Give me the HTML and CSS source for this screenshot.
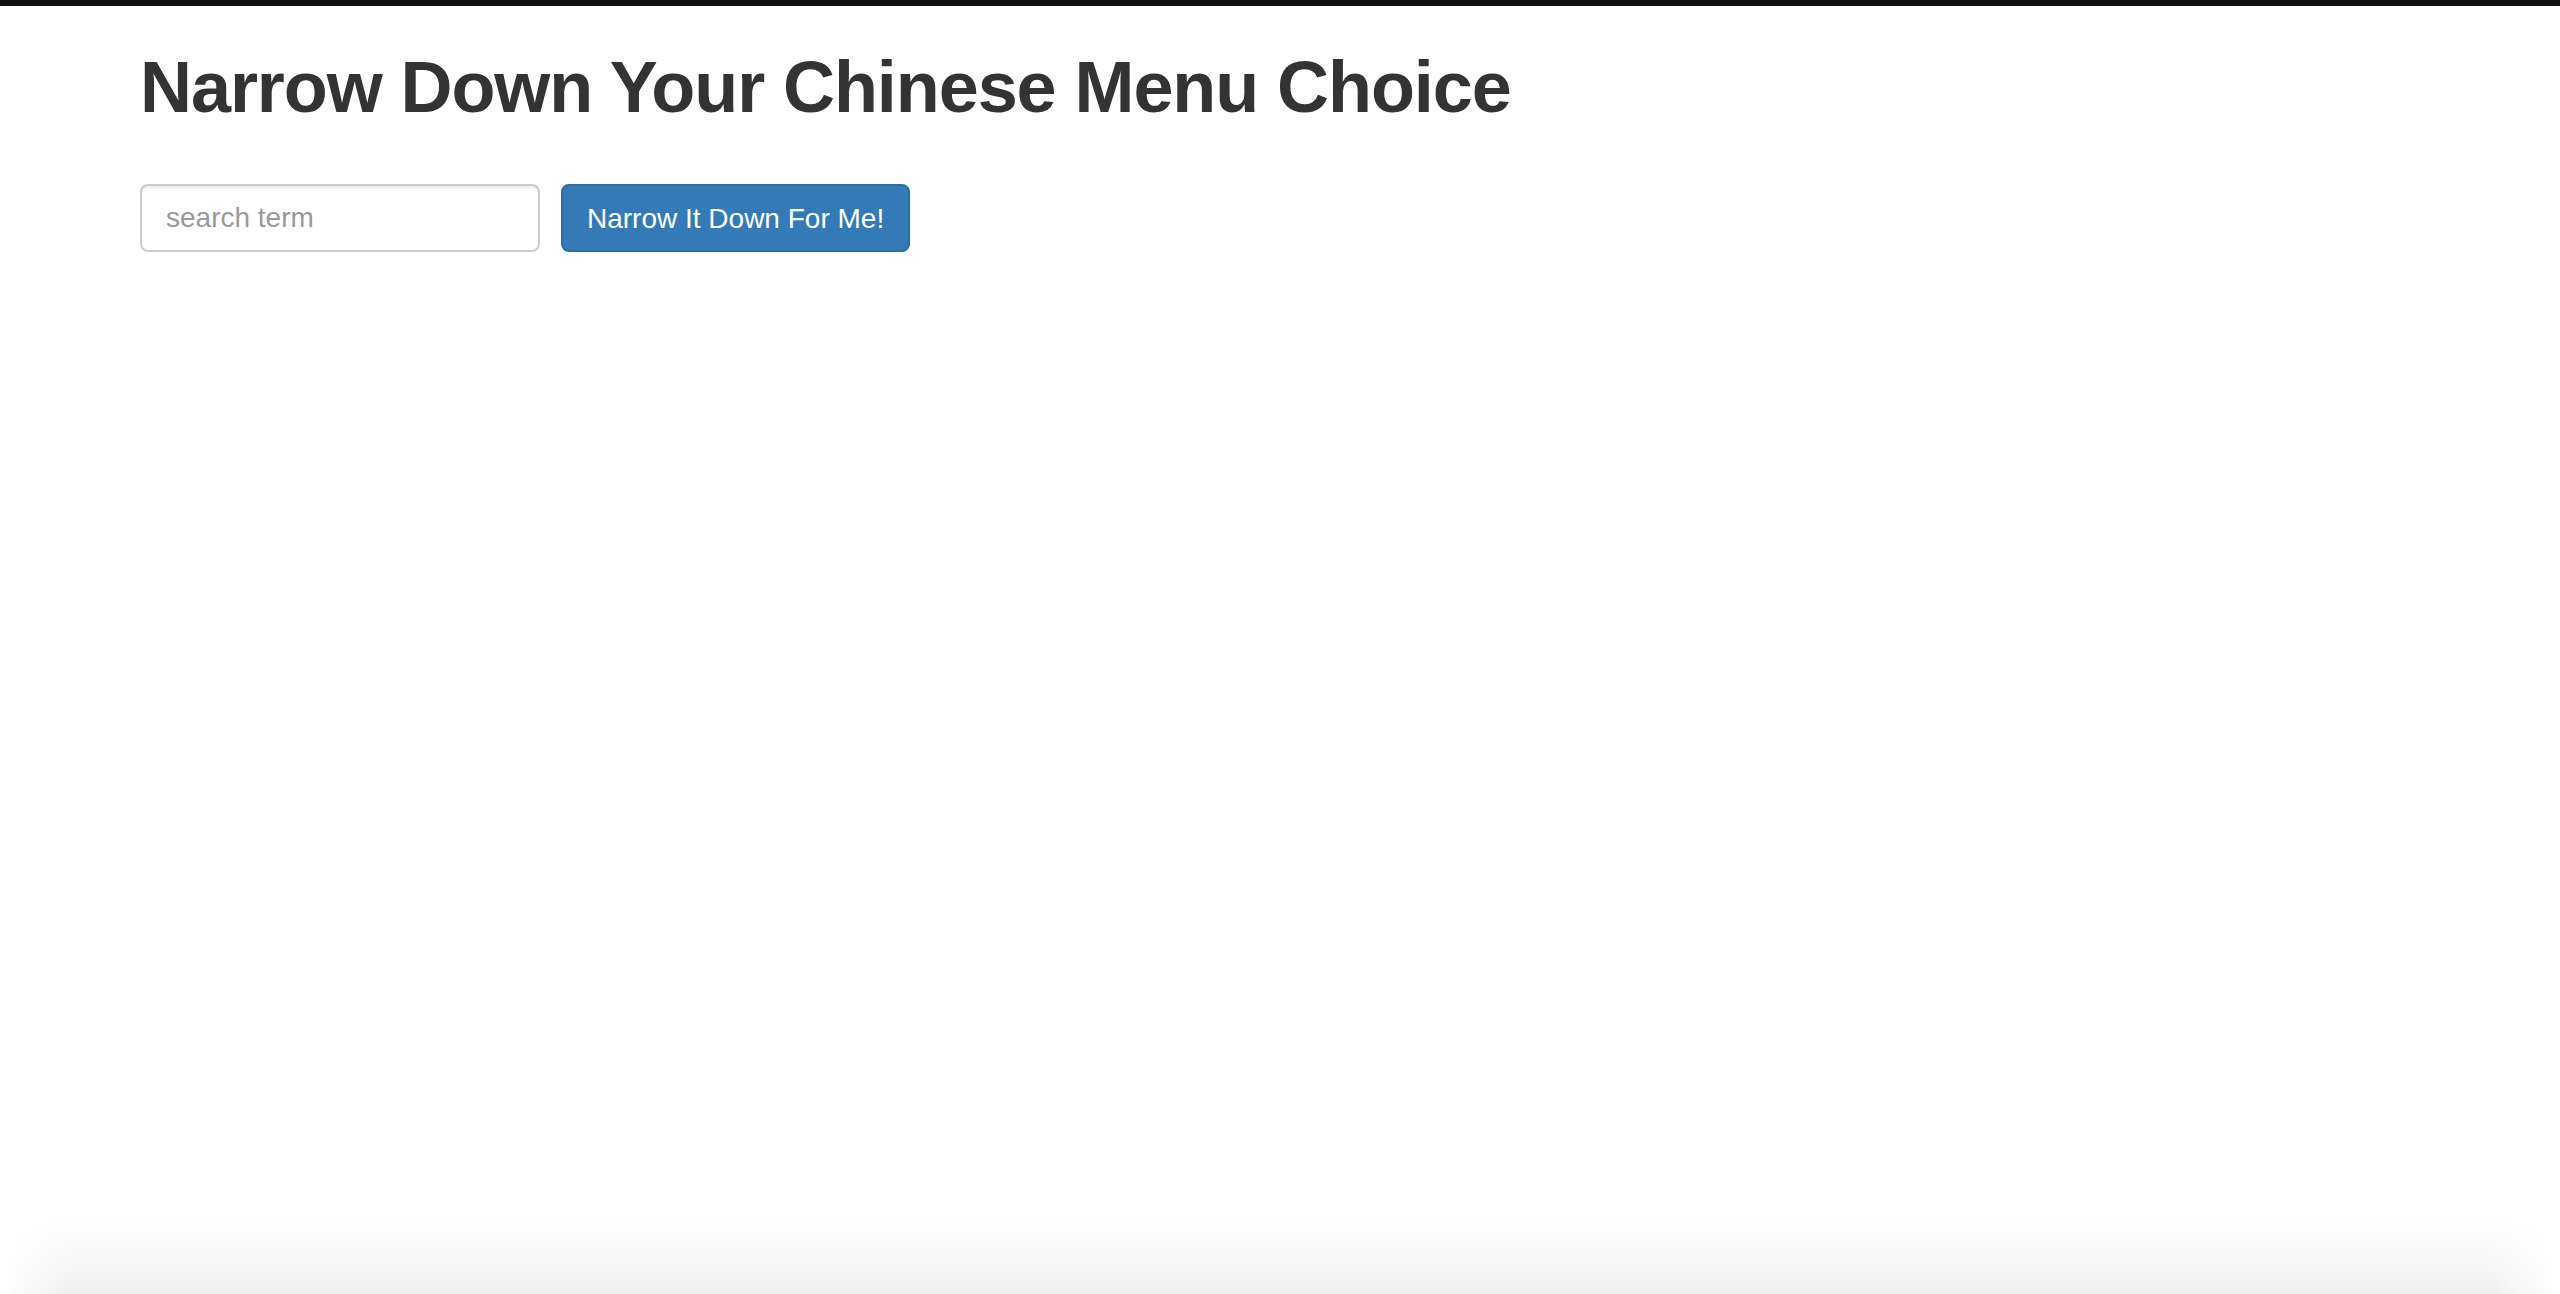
FILE: index.html
```html
<!DOCTYPE html>
<html lang="en">
<head>
<meta charset="utf-8">
<title>Narrow Down Your Chinese Menu Choice</title>
<link rel="stylesheet" href="styles.css">
</head>
<body>
<div class="topbar"></div>
<div class="container">
  <h1 class="title">Narrow Down Your Chinese Menu Choice</h1>
  <div class="search-form">
    <input class="search-input" type="text" placeholder="search term">
    <button class="btn-primary" type="button">Narrow It Down For Me!</button>
  </div>
</div>
<div class="bottom-shade"></div>
</body>
</html>
```
FILE: styles.css
```css
html, body {
  margin: 0;
  padding: 0;
  background: #ffffff;
  height: 100%;
}
body {
  font-family: "Liberation Sans", Arial, Helvetica, sans-serif;
  color: #333333;
  overflow: hidden;
}
.topbar {
  height: 6px;
  background: #111111;
}
.container {
  padding: 0 140px;
}
.title {
  margin: 42px 0 0 0;
  font-size: 72px;
  font-weight: 700;
  line-height: 1.1;
  letter-spacing: -1.08px;
  color: #333333;
}
.search-form {
  display: flex;
  align-items: center;
  gap: 21px;
  margin-top: 57px;
}
.search-input {
  box-sizing: border-box;
  width: 400px;
  height: 68px;
  padding: 12px 24px;
  border: 2px solid #cccccc;
  border-radius: 8px;
  font-family: "Liberation Sans", Arial, sans-serif;
  font-size: 28px;
  color: #555555;
  background: #ffffff;
  box-shadow: inset 0 2px 2px rgba(0,0,0,0.075);
  outline: none;
}
.search-input::placeholder {
  color: #999999;
}
.btn-primary {
  box-sizing: border-box;
  height: 68px;
  padding: 12px 24px;
  border: 2px solid #2e6da4;
  border-radius: 8px;
  background: #337ab7;
  color: #ffffff;
  font-family: "Liberation Sans", Arial, sans-serif;
  font-size: 28px;
  line-height: 1.4;
  cursor: pointer;
}
.bottom-shade {
  position: fixed;
  left: 0;
  right: 0;
  bottom: 0;
  height: 85px;
  background: linear-gradient(to bottom, rgba(239,239,239,0) 0%, rgba(239,239,239,0.45) 60%, #efefef 100%);
  -webkit-mask-image: linear-gradient(to right, transparent 0, #000 70px, #000 calc(100% - 70px), transparent 100%);
  mask-image: linear-gradient(to right, transparent 0, #000 70px, #000 calc(100% - 70px), transparent 100%);
}
```
